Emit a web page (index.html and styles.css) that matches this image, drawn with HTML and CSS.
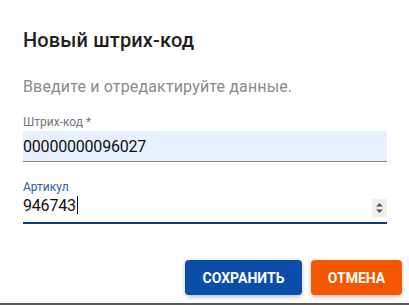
FILE: index.html
```html
<!DOCTYPE html>
<html lang="ru">
  <head>
    <meta charset="UTF-8" />
    <meta name="viewport" content="width=device-width, initial-scale=1.0" />
    <title>Новый штрих-код</title>
    <link rel="stylesheet" href="styles.css">
  </head>
  <body>
    <div class="dialog">
      <div class="dialog-content">
        <h2 class="dialog-title">Новый штрих-код</h2>
        <p class="dialog-text">Введите и отредактируйте данные.</p>

        <div class="field filled">
          <label class="field-label">Штрих-код *</label>
          <div class="field-input">00000000096027</div>
        </div>

        <div class="field focused">
          <label class="field-label">Артикул</label>
          <div class="field-input">
            <span class="value">946743<span class="caret"></span></span>
            <span class="spinner">
              <svg width="15" height="18" viewBox="0 0 15 18">
                <path d="M4 7.5 L7.5 4 L11 7.5 Z" fill="#555" />
                <path d="M4 10.5 L7.5 14 L11 10.5 Z" fill="#555" />
              </svg>
            </span>
          </div>
        </div>
      </div>

      <div class="dialog-actions">
        <button class="btn btn-save">Сохранить</button>
        <button class="btn btn-cancel">Отмена</button>
      </div>
    </div>
  </body>
</html>
```

FILE: styles.css
```css
/* Base */
* {
  box-sizing: border-box;
  margin: 0;
  padding: 0;
}

body {
  font-family: Roboto, "Liberation Sans", sans-serif;
  background-color: #5a5a5a;
  height: 305px;
  overflow: hidden;
}

/* Dialog */
.dialog {
  height: 303px;
  background-color: #fff;
  display: flex;
  flex-direction: column;
}

.dialog-content {
  padding: 24px 22px 0 23px;
}

.dialog-title {
  font-size: 20px;
  font-weight: 500;
  line-height: 32px;
  color: #1f1f1f;
  letter-spacing: 0.15px;
}

.dialog-text {
  margin-top: 19px;
  font-size: 16px;
  line-height: 24px;
  color: #8a8a8a;
  letter-spacing: 0.15px;
}

/* Fields */
.field {
  margin-top: 15px;
}

.field + .field {
  margin-top: 17px;
}

.field-label {
  display: block;
  font-size: 12px;
  line-height: 17px;
  color: #7d7380;
}

.field-input {
  font-size: 16px;
  color: #111;
  display: flex;
  align-items: center;
  letter-spacing: -0.2px;
}

.filled .field-input {
  height: 31px;
  background-color: #e8f0fe;
  border-bottom: 1px solid #888;
}

.focused .field-label {
  line-height: 16px;
  color: #2d5c9f;
}

.focused .field-input {
  height: 29px;
  padding-bottom: 6px;
  border-bottom: 2px solid #0c3a7a;
  justify-content: space-between;
}

.caret {
  display: inline-block;
  width: 1px;
  height: 18px;
  background-color: #111;
  vertical-align: -3px;
  margin-left: 1px;
}

.spinner {
  display: flex;
  background-color: #efefef;
  margin-top: 4px;
}

/* Actions */
.dialog-actions {
  margin-top: auto;
  padding: 0 7px 8px 0;
  display: flex;
  justify-content: flex-end;
  gap: 9px;
}

.btn {
  height: 35px;
  padding: 0 16px;
  border: none;
  border-radius: 4px;
  font-family: Roboto, "Liberation Sans", sans-serif;
  font-size: 14px;
  font-weight: 700;
  text-transform: uppercase;
  color: #fff;
  box-shadow: 0 2px 4px rgba(0, 0, 0, 0.25);
  cursor: pointer;
}

.btn-save {
  width: 117px;
  background-color: #0a4eaa;
}

.btn-cancel {
  width: 91px;
  background-color: #f55700;
}
```
